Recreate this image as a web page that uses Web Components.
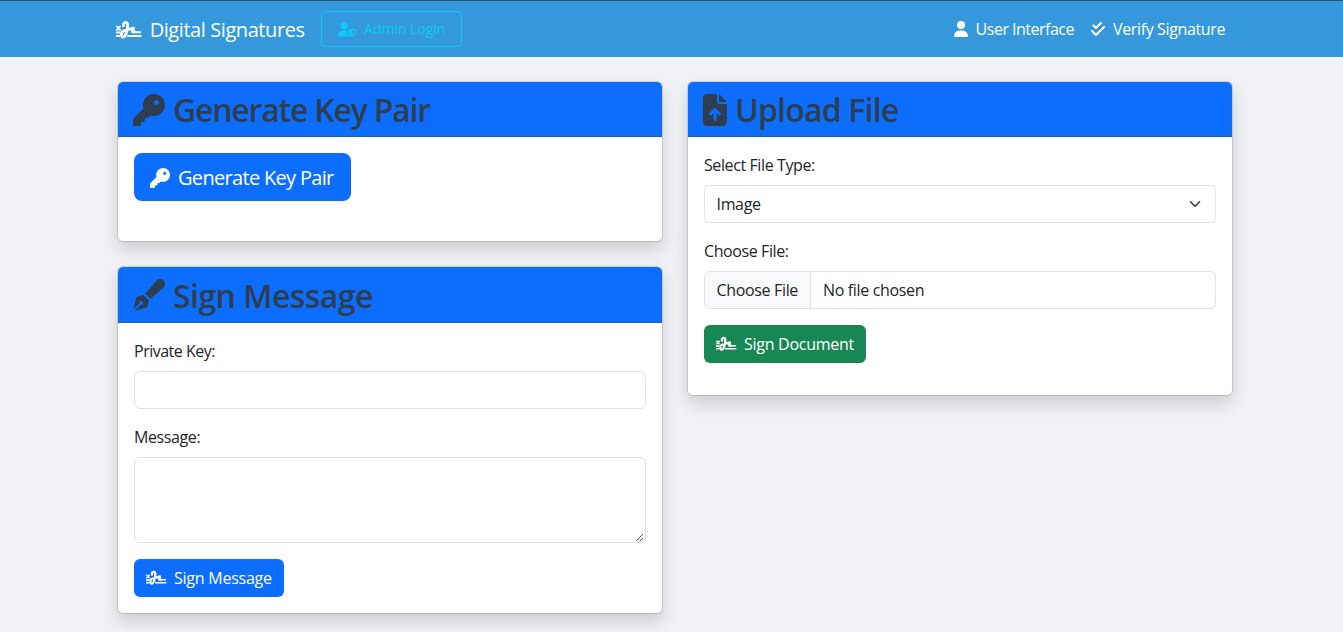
<!DOCTYPE html>
<html lang="en"><head><meta charset="utf-8"><title>Digital Signatures</title>
<style>
html,body{margin:0;height:100%}
body{font:400 16px/24px "Segoe UI","Open Sans","Noto Sans",sans-serif;color:#212529;background:#f0f2f5;overflow:hidden;letter-spacing:-.34px}
</style></head><body>
<signature-page></signature-page>
<script>
const ICONS={
key:[512,'M336 352c97.2 0 176-78.8 176-176S433.2 0 336 0S160 78.8 160 176c0 18.7 2.9 36.8 8.3 53.7L7 391c-4.5 4.5-7 10.6-7 17v80c0 13.3 10.7 24 24 24h80c13.3 0 24-10.7 24-24V448h40c13.3 0 24-10.7 24-24V384h40c6.4 0 12.5-2.5 17-7l33.3-33.3c16.9 5.4 35 8.3 53.7 8.3zM376 96a40 40 0 1 1 0 80 40 40 0 1 1 0-80z'],
user:[448,'M224 256A128 128 0 1 0 224 0a128 128 0 1 0 0 256zm-45.7 48C79.8 304 0 383.8 0 482.3C0 498.7 13.3 512 29.7 512H418.3c16.4 0 29.7-13.3 29.7-29.7C448 383.8 368.2 304 269.7 304H178.3z'],
checks:[448,'M342.6 86.6c12.5-12.5 12.5-32.8 0-45.3s-32.8-12.5-45.3 0L160 178.7l-57.4-57.4c-12.5-12.5-32.8-12.5-45.3 0s-12.5 32.8 0 45.3l80 80c12.5 12.5 32.8 12.5 45.3 0l160-160zm96 128c12.5-12.5 12.5-32.8 0-45.3s-32.8-12.5-45.3 0L160 402.7 54.6 297.4c-12.5-12.5-32.8-12.5-45.3 0s-12.5 32.8 0 45.3l128 128c12.5 12.5 32.8 12.5 45.3 0l256-256z'],
pen:[512,'M373.5 27.1C388.5 9.9 410.2 0 433 0c43.6 0 79 35.4 79 79c0 22.8-9.9 44.6-27.1 59.6L277.7 319l-10.3-10.3-64-64L193 234.3 373.5 27.1zM170.3 256.9l10.4 10.4 64 64 10.4 10.4-19.2 83.4c-3.9 17.1-16.9 30.7-33.8 35.4L24.4 510.3l95.4-95.4c2.6 .7 5.4 1.1 8.3 1.1c17.7 0 32-14.3 32-32s-14.3-32-32-32s-32 14.3-32 32c0 2.9 .4 5.6 1.1 8.3L1.7 487.6 51.5 310c4.7-16.9 18.3-29.9 35.4-33.8l83.4-19.2z'],
upload:[384,'M64 0C28.7 0 0 28.7 0 64V448c0 35.3 28.7 64 64 64H320c35.3 0 64-28.7 64-64V160H256c-17.7 0-32-14.3-32-32V0H64zM256 0V128H384L256 0zM216 408c0 13.3-10.7 24-24 24s-24-10.7-24-24V305.9l-31 31c-9.4 9.4-24.6 9.4-33.9 0s-9.4-24.6 0-33.9l72-72c9.4-9.4 24.6-9.4 33.9 0l72 72c9.4 9.4 9.4 24.6 0 33.9s-24.6 9.4-33.9 0l-31-31V408z'],
admin:[640,'M224 256A128 128 0 1 0 224 0a128 128 0 1 0 0 256zm-45.7 48C79.8 304 0 383.8 0 482.3C0 498.7 13.3 512 29.7 512H418.3c1.8 0 3.5-.2 5.3-.5c-76.3-55.1-99.8-141-103.1-200.2c-16.1-4.8-33.1-7.3-50.7-7.3H178.3zm308.8-78.3l-120 48C358 277.4 352 286.2 352 296c0 63.3 25.9 168.8 134.8 214.2c5.9 2.5 12.6 2.5 18.5 0C614.1 464.8 640 359.3 640 296c0-9.8-6-18.6-15.1-22.3l-120-48c-5.7-2.3-12.1-2.3-17.8 0zM591.4 312c-3.9 50.7-27.2 116.7-95.4 149.7V273.8L591.4 312z']};
const SIGNATURE='<svg viewBox="0 0 656 512" fill="none" stroke="currentColor" stroke-linecap="round" stroke-linejoin="round"><path stroke-width="72" d="M190 148v-22C190 36 298 36 298 128C298 250 252 436 182 436C124 436 122 305 192 280L446 205L420 306H480"/><path stroke-width="50" d="M24 170l78 78M102 170l-78 78M470 312H622"/><path stroke-width="52" d="M20 322H90M20 408H90M310 408H632"/></svg>';
function define(name,html){customElements.define(name,class extends HTMLElement{
 constructor(){super();this.attachShadow({mode:'open'}).innerHTML=html}});}
customElements.define('ui-icon',class extends HTMLElement{
 constructor(){super();this.attachShadow({mode:'open'})}
 connectedCallback(){const n=this.getAttribute('name'),[w,d]=ICONS[n]||[656];
 this.shadowRoot.innerHTML=`<style>:host{display:inline-block;flex:none;height:1em;width:${w/512}em;line-height:1}svg{display:block;width:100%;height:100%;overflow:visible}</style>`+(n==='signature'?SIGNATURE:`<svg viewBox="0 0 ${w} 512" fill="currentColor"><path fill-rule="evenodd" d="${d}"/></svg>`)}});
define('nav-bar',`<style>:host{display:block;box-sizing:border-box;height:57px;border-top:1px solid #2c5777;background:#3498db;color:#fff;white-space:nowrap}
.in{display:flex;align-items:center;box-sizing:border-box;height:56px;width:1140px;margin:0 0 0 104px;padding:0 19px 0 12px}
.brand{display:flex;align-items:center;font-size:20px;gap:8px;letter-spacing:-.42px;margin-right:16.5px;height:30px;padding-top:2px}
.admin{display:flex;box-sizing:border-box;align-items:center;width:141px;height:36px;border:1px solid #0dcaf0;border-radius:4px;padding:0 16px;color:#0dcaf0;font-size:14px;gap:8px;letter-spacing:-.05px}
.link{display:flex;align-items:center;gap:8.5px;margin-left:16.5px;letter-spacing:-.37px}.first{margin-left:auto;gap:8px;letter-spacing:-.5px}.admin ui-icon{font-size:14.5px}</style>
<div class="in"><div class="brand"><ui-icon name="signature"></ui-icon><span>Digital Signatures</span></div><div class="admin"><ui-icon name="admin"></ui-icon><span>Admin Login</span></div>
<div class="link first"><ui-icon name="user"></ui-icon><span>User Interface</span></div><div class="link"><ui-icon name="checks"></ui-icon><span>Verify Signature</span></div></div>`);
define('ui-card',`<style>:host{display:block;box-sizing:border-box;background:#fff;background-clip:padding-box;border:1px solid rgba(0,0,0,.12);border-radius:6px;box-shadow:0 8px 16px rgba(0,0,0,.15)}
header{display:flex;box-sizing:border-box;height:var(--head,55px);padding:1px 15px 0;align-items:center;gap:8px;background:#0d6efd;border-bottom:1px solid #1f5fb8;border-radius:5px 5px 0 0;color:#2c3e50;font-weight:600;font-size:32px;letter-spacing:var(--title-ls,-.5px);white-space:nowrap}
::slotted([slot=title]){padding-top:1px}
.body{padding:16px}</style><header><slot name="icon"></slot><slot name="title"></slot></header><div class="body"><slot></slot></div>`);
define('ui-button',`<style>:host{display:flex;box-sizing:border-box;width:fit-content;align-items:center;height:38px;padding:0 12px;gap:7.5px;border-radius:6px;background:#0d6efd;color:#fff;letter-spacing:-.24px;white-space:nowrap}:host([success]){background:#198754;letter-spacing:-.28px}:host([large]){height:48px;font-size:20px;border-radius:8px;padding:1px 17px 0 16px;gap:8px;letter-spacing:-.68px}:host([large]) ::slotted(span){padding-top:1px}</style><slot></slot>`);
define('ui-label',`<style>:host{display:block;height:24px;margin-bottom:8px;letter-spacing:-.4px}</style><slot></slot>`);
define('ui-field',`<style>:host{display:flex;align-items:center;box-sizing:border-box;height:38px;border:1px solid #dee2e6;border-radius:6px;background:#fff;margin-bottom:16px;padding:0 12px 0 11.5px;justify-content:space-between}:host([area]){height:86px;align-items:flex-end;padding:0}</style><slot></slot>`);
define('file-field',`<style>:host{display:flex;box-sizing:border-box;height:38px;border:1px solid #dee2e6;border-radius:6px;overflow:hidden;margin-bottom:16px;line-height:36px}b{font-weight:400;background:#f8f9fa;border-right:1px solid #dee2e6;box-sizing:border-box;width:106px;padding-left:11.5px;white-space:nowrap}span{padding-left:12px}</style><b><slot name="button"></slot></b><span><slot></slot></span>`);
define('signature-page',`<style>:host{display:block}main{display:grid;grid-template-columns:546px 546px;column-gap:24px;align-items:start;margin:24px 0 0 117px}.left{display:grid;gap:24px}.key{height:161px;--title-ls:-1.22px}.sign{height:348px;--head:56px;--title-ls:-.57px}.file{height:315px;--title-ls:-.8px}.sign ui-label:nth-of-type(1){letter-spacing:-.5px}.chev{margin-right:2px}</style><nav-bar></nav-bar><main><div class="left">
<ui-card class="key"><ui-icon slot="icon" name="key"></ui-icon><span slot="title">Generate Key Pair</span><ui-button large><ui-icon name="key"></ui-icon><span>Generate Key Pair</span></ui-button></ui-card>
<ui-card class="sign"><ui-icon slot="icon" name="pen"></ui-icon><span slot="title">Sign Message</span><ui-label>Private Key:</ui-label><ui-field></ui-field><ui-label>Message:</ui-label><ui-field area><i></i><svg width="10" height="10" stroke="#555" stroke-width="1"><path d="M1 9L8 2M5 9L8 6"/></svg></ui-field><ui-button><ui-icon name="signature"></ui-icon><span>Sign Message</span></ui-button></ui-card></div>
<ui-card class="file"><ui-icon slot="icon" name="upload"></ui-icon><span slot="title">Upload File</span><ui-label>Select File Type:</ui-label><ui-field><span>Image</span><svg class="chev" width="12" height="12" viewBox="0 0 16 16" fill="none" stroke="#343a40" stroke-width="2" stroke-linecap="round" stroke-linejoin="round"><path d="M2 5l6 6 6-6"/></svg></ui-field><ui-label>Choose File:</ui-label><file-field><span slot="button">Choose File</span>No file chosen</file-field><ui-button success><ui-icon name="signature"></ui-icon><span>Sign Document</span></ui-button></ui-card></main>`);
</script></body></html>
